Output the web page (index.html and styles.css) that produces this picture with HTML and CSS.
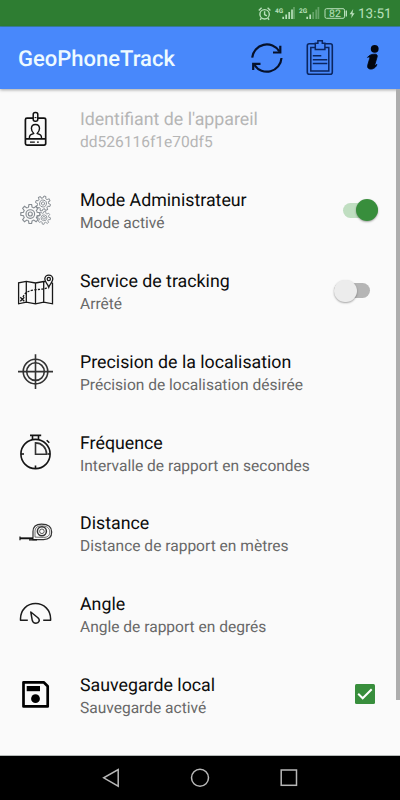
FILE: index.html
```html
<!DOCTYPE html>
<html lang="fr">
<head>
<meta charset="utf-8">
<title>GeoPhoneTrack</title>
<link rel="stylesheet" href="styles.css">
</head>
<body>
<div class="screen">
  <div class="status">
    <svg class="status-icons" viewBox="256 0 100 27" width="100" height="27">
      <g fill="none" stroke="#b9e0bb" stroke-width="1.4">
        <circle cx="264.6" cy="14.3" r="4.7"/>
        <path d="M264.6 11.3v3.2l2.2 1.4M258.8 10.4l2.8-2.6M270.4 10.4l-2.8-2.6M261.4 18.3l-1.3 1.5M267.8 18.3l1.3 1.5"/>
      </g>
      <g stroke="#b9e0bb" stroke-width="1.7">
        <path d="M283.2 19v-2.2M286.2 19v-4.5M289.2 19v-7M292 19v-9.5"/>
        <path d="M307.2 19v-2.2M310.2 19v-4.5"/>
        <path opacity=".4" d="M294 19v-12M313.2 19v-7M316.2 19v-9.5M318.4 19v-12"/>
      </g>
      <text class="net" x="275" y="12.5">4G</text>
      <text class="net" x="299" y="12.5">2G</text>
      <rect x="325" y="8.7" width="19.5" height="9.6" rx="1.5" fill="none" stroke="#b9e0bb" stroke-width="1"/>
      <path d="M346.3 10.5v6" stroke="#b9e0bb" stroke-width="1.4"/>
      <text class="level" x="329" y="17.3">82</text>
      <path d="M353.2 9l-3.6 5.2h2.2l-.6 4 3.4-5h-2.1z" fill="#b9e0bb"/>
    </svg>
    <span class="clock">13:51</span>
  </div>

  <header class="bar">
    <h1>GeoPhoneTrack</h1>
    <svg class="actions" viewBox="240 27 160 62" width="160" height="62">
      <g fill="none" stroke="#06112a" stroke-width="2.2">
        <path d="M252.2 57.7A14.7 14.7 0 0 1 279.3 51.4M281.5 58A14.7 14.7 0 0 1 254.5 65"/>
        <path d="M280.3 45.7v6.8h-7.3M253.2 70v-6.2h7.3"/>
      </g>
      <g fill="none" stroke="#0b2660">
        <rect x="307.3" y="43.8" width="25" height="30.5" rx="2" stroke-width="1.6"/>
        <path d="M315 47.4h-4.2v23.5h18v-23.5h-4" stroke-width="1.5"/>
        <path d="M315.3 49.5v-6.2h2.6v-2.6h4.4v2.6h2.6v6.2z" fill="#4888fb" stroke-width="1.5"/>
        <path d="M312.8 55.7h8.5M312.8 59.8h14.5M312.8 63.5h14.5" stroke-width="1.4"/>
      </g>
      <g fill="#03060f">
        <circle cx="374.7" cy="48.8" r="3.9"/>
        <path d="M367.5 57.4c2-2.6 4.7-3.4 8-3.2 1.6.2 2 1.3 1.6 2.8l-2.2 7.5c-.3 1.1.4 1.2 1.900-.2.3 1.400-2.500 4.800-5.700 4.800-3.200 0-4-1.800-3.300-4.300l1.900-6.400c.2-1.200-.8-1.600-2.200-1z" stroke="#03060f" stroke-width=".8"/>
      </g>
    </svg>
  </header>

  <main class="list">
    <section class="row disabled">
      <svg class="icon" viewBox="16 110.4 40 40">
        <g fill="none" stroke="#111" stroke-width="1.7" stroke-linejoin="round">
          <path d="M33 118.6h-6q-1.6 0-1.6 1.6v23.7q0 1.6 1.6 1.6h17q1.7 0 1.7-1.6v-23.7q0-1.6-1.7-1.6h-6M25.4 139.3h20.3"/>
          <rect x="33.2" y="113" width="4.6" height="8.6" rx="2" stroke-width="1.5"/>
          <path d="M34.5 118h2" stroke-width="1"/>
          <path d="M29.3 139c0-3.7 1.6-4.1 4.5-5.1-1.9-1.7-2.4-3.2-2.4-4.9 0-2.6 1.7-4.1 4.1-4.1s4 1.5 4 4.1c0 1.7-.5 3.2-2.4 4.9 2.9 1 4.5 1.4 4.5 5.1" stroke-width="1.4"/>
          <path d="M30 142.5h4.8M37 142.5h1.8" stroke-width="1.3"/>
        </g>
      </svg>
      <div class="text"><div class="title">Identifiant de l'appareil</div><div class="sub">dd526116f1e70df5</div></div>
    </section>

    <section class="row">
      <svg class="icon" viewBox="16 191.2 40 40">
        <defs>
          <path id="tooth" d="M-2.68-6.47L-1.8-6.8-1.3-9.5H1.3L1.8-6.8 2.68-6.47"/>
          <g id="gear" fill="none" stroke="#858b91" stroke-width="1.15">
            <use href="#tooth"/><use href="#tooth" transform="rotate(45)"/><use href="#tooth" transform="rotate(90)"/><use href="#tooth" transform="rotate(135)"/><use href="#tooth" transform="rotate(180)"/><use href="#tooth" transform="rotate(225)"/><use href="#tooth" transform="rotate(270)"/><use href="#tooth" transform="rotate(315)"/>
            <circle r="4.3"/><circle r="2"/>
          </g>
        </defs>
        <use href="#gear" transform="translate(30.3 214.2)"/>
        <use href="#gear" transform="translate(43 203.7) rotate(15) scale(.79)"/>
        <use href="#gear" transform="translate(44 218) rotate(8) scale(.68)"/>
      </svg>
      <div class="text"><div class="title">Mode Administrateur</div><div class="sub">Mode activé</div></div>
      <div class="switch on"><i></i></div>
    </section>

    <section class="row">
      <svg class="icon" viewBox="16 272 40 40">
        <g fill="none" stroke="#191919" stroke-width="1.3">
          <path d="M45.3 281.6l-1.6-.1-8.2 1.5-9.2-1.7-7.7 1.6v20.9l7.7-1.7 9.2 1.7 8.2-1.7 8.8 1.7v-20.6l-1-.2M26.3 281.3v20.8M35.5 283v20.8M43.7 281.5v20.6"/>
          <path d="M23 297c1.7-4.4 5.8-6.4 11-7.1 5.5-.8 10.5-.2 14.5-3" stroke-dasharray="2.2 1.3"/>
          <path d="M20.3 297.3l4 4M24.3 297.3l-4 4"/>
          <path d="M48.8 287.1c-.8-3-4-5-4-8a4 4 0 0 1 8 0c0 3-3.2 5-4 8z"/>
          <circle cx="48.8" cy="279" r="1.6"/>
        </g>
      </svg>
      <div class="text"><div class="title">Service de tracking</div><div class="sub">Arrêté</div></div>
      <div class="switch off"><i></i></div>
    </section>

    <section class="row">
      <svg class="icon" viewBox="16 352.8 40 40">
        <g fill="none" stroke="#333" stroke-width="1.6">
          <circle cx="35.5" cy="371.4" r="12.3"/><circle cx="35.5" cy="371.4" r="8.8"/>
          <path d="M18 371.4h35M35.5 354v34.8"/>
        </g>
      </svg>
      <div class="text"><div class="title">Precision de la localisation</div><div class="sub">Précision de localisation désirée</div></div>
    </section>

    <section class="row">
      <svg class="icon" viewBox="16 434.3 40 40">
        <g fill="none" stroke="#151515" stroke-width="1.6">
          <circle cx="35.5" cy="454.3" r="14.6"/>
          <path d="M30 435.7h11.2M32.5 435.7v4.3M38.5 435.7v4.3M46.7 440.5l2.6 2.6M21 454.3h3M47.5 454.3h2.5M35.5 465.8v3"/>
          <path d="M35.5 443.2v11.3h11.1c0-6.5-4.8-11.3-11.1-11.3z" stroke="#333"/>
        </g>
      </svg>
      <div class="text"><div class="title">Fréquence</div><div class="sub">Intervalle de rapport en secondes</div></div>
    </section>

    <section class="row">
      <svg class="icon" viewBox="16 514.4 40 40">
        <g fill="none" stroke="#333" stroke-width="1.2">
          <path d="M33 540v-8c0-5.2 3.7-7.5 8.5-7.5 6.6 0 10.2 2.9 10.2 8 0 4.7-3 7.5-8.2 7.5z"/>
          <path d="M35 537.5v-5.5c0-4 2.5-5.7 6.5-5.7 5.3 0 8.3 2.1 8.3 6.2 0 3.5-2.2 5.3-6.3 5.3z" stroke-width=".7"/>
          <circle cx="41.9" cy="531.7" r="4.5" stroke-width="1.5"/><circle cx="41.9" cy="531.7" r="2.3" stroke-width=".8"/>
          <path d="M20 538.7h13" stroke="#111" stroke-width="1.9"/><path d="M20 537v3.6M29 540.2h8" stroke="#111"/>
        </g>
      </svg>
      <div class="text"><div class="title">Distance</div><div class="sub">Distance de rapport en mètres</div></div>
    </section>

    <section class="row">
      <svg class="icon" viewBox="16 595.2 40 40">
        <g fill="none" stroke="#1d1d1d" stroke-width="1.5" stroke-linejoin="round">
          <path d="M27.8 620.5h-7.3v-1.5c0-8.8 6.5-15.3 15-15.3s15.1 6.5 15.1 15.3v1.5h-7.4"/>
          <path d="M30.8 612.2l6.8 5.5c3.2 2.6 1.3 5.7-1.6 5.7-2.2 0-3.4-1.2-3.8-3.1z"/>
        </g>
      </svg>
      <div class="text"><div class="title">Angle</div><div class="sub">Angle de rapport en degrés</div></div>
    </section>

    <section class="row">
      <svg class="icon" viewBox="16 676 40 40">
        <path d="M23.5 682.3h20.2l4 4v20.1h-24.2z" fill="none" stroke="#000" stroke-width="2.7" stroke-linejoin="round"/>
        <rect x="26.7" y="686" width="13.3" height="5.2"/><circle cx="35.5" cy="698.7" r="4.4"/>
      </svg>
      <div class="text"><div class="title">Sauvegarde local</div><div class="sub">Sauvegarde activé</div></div>
      <svg class="check" viewBox="0 0 20 20"><rect width="20" height="20" rx="1.5" fill="#388e3c"/><path d="M3.2 9.8l4.5 4.5 9-9" fill="none" stroke="#fff" stroke-width="2"/></svg>
    </section>
    <div class="scroll"></div>
  </main>

  <nav class="nav">
    <svg viewBox="0 0 400 44" width="400" height="44">
      <g fill="none" stroke="#b8b8b8" stroke-width="1.5">
        <path d="M118.2 13.5v16.6l-14.5-8.3z"/><circle cx="200" cy="21.7" r="8.5"/><rect x="281.2" y="14" width="15.3" height="15.3"/>
      </g>
    </svg>
  </nav>
</div>
</body>
</html>
```
FILE: styles.css
```css
* { box-sizing: border-box; }
body { margin: 0; font-family: Roboto, "Liberation Sans", sans-serif; text-rendering: geometricPrecision; }
.screen { width: 400px; height: 800px; display: flex; flex-direction: column; background: #fafafa; overflow: hidden; }
.status { height: 27px; flex: none; background: #2e7d32; border-bottom: 1px solid #3a81a0; display: flex; align-items: center; justify-content: flex-end; padding-right: 9px; }
.status-icons { display: block; margin-right: 2px; }
.net { font-size: 6.5px; font-weight: 700; fill: #b9e0bb; }
.level { font-size: 10.5px; fill: #b9e0bb; }
.clock { width: 33px; padding-top: 2px; font-size: 13.5px; line-height: 26px; color: #b9e0bb; white-space: nowrap; }
.bar { height: 62px; flex: none; background: #4888fb; display: flex; align-items: center; justify-content: space-between; padding-left: 18px; box-shadow: 0 1px 3px rgba(0, 0, 0, .35); position: relative; }
h1 { margin: 2px 0 0; font-size: 22px; font-weight: 500; color: #edfaff; }
.actions { display: block; }
.list { flex: 1; padding-top: 1px; position: relative; border-bottom: 1px solid #b5bab8; }
.row { height: 80.8px; display: flex; align-items: center; padding: 0 22px 0 16px; }
.icon { width: 40px; height: 40px; flex: none; margin-right: 24px; }
.text { flex: 1; padding-top: 1px; white-space: nowrap; }
.title { font-size: 17.8px; line-height: 23px; color: #0c0c0c; }
.sub { font-size: 15.55px; line-height: 22px; color: #686868; }
.disabled .title, .disabled .sub { color: #b5b5b5; }
.switch { position: relative; width: 35.5px; height: 23px; margin-bottom: 2px; display: flex; align-items: center; }
.switch::before { content: ""; position: absolute; left: 0; right: 0; top: 4px; height: 15px; border-radius: 8px; background: #b5b5b5; }
.switch i { position: relative; width: 22.5px; height: 22.5px; border-radius: 50%; box-shadow: 0 1px 2px rgba(0, 0, 0, .35); }
.on { justify-content: flex-end; }
.on::before { background: #c0dec1; }
.on i { background: #388e3c; }
.off { margin-right: 8.5px; }
.off i { background: #ececec; }
.check { width: 20px; height: 20px; margin: 0 3.5px 3.5px 0; }
.scroll { position: absolute; right: 0; top: 0; width: 4px; height: 611px; background: #adadad; }
.nav { height: 44px; flex: none; background: #000; }
.nav svg { display: block; }
```
